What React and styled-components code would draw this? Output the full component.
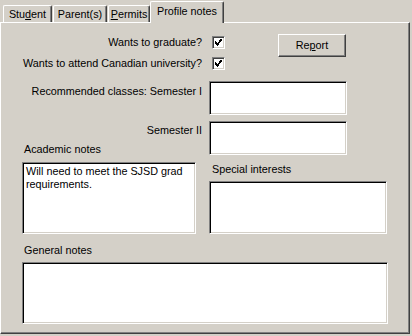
import React from 'react';
import styled, { createGlobalStyle } from 'styled-components';

const GlobalStyle = createGlobalStyle`
  html, body {
    margin: 0;
    padding: 0;
    background: #d4d0c8;
  }
  body {
    font-family: "Liberation Sans", Arial, sans-serif;
    font-size: 10.8px;
    color: #000;
  }
`;

const Window = styled.div`
  width: 412px;
  height: 336px;
  background: #d4d0c8;
  box-sizing: border-box;
`;

const TabBar = styled.div`
  display: flex;
  align-items: flex-end;
  height: 22px;
  padding-left: 3px;
  position: relative;
  z-index: 2;
`;

const Tab = styled.div`
  box-sizing: border-box;
  width: ${(p) => p.$w}px;
  height: ${(p) => (p.$active ? '22px' : '17px')};
  margin: ${(p) => (p.$active ? '0 -1px -1px -1px' : '0 1px 0 0')};
  padding-top: ${(p) => (p.$active ? '3px' : '2px')};
  background: #d4d0c8;
  border-top: 1px solid #fff;
  border-left: 1px solid #fff;
  border-right: 1px solid #404040;
  box-shadow: inset -1px 0 0 #808080;
  border-radius: 2px 2px 0 0;
  line-height: 13px;
  text-align: center;
  white-space: nowrap;
  position: relative;
  z-index: ${(p) => (p.$active ? 3 : 1)};
`;

const Panel = styled.div`
  box-sizing: border-box;
  width: 410px;
  height: 312px;
  border-top: 1px solid #fff;
  border-left: 1px solid #fff;
  border-right: 1px solid #404040;
  border-bottom: 1px solid #404040;
  box-shadow: inset -1px -1px 0 #808080;
  padding: 11px 0 0 20px;
`;

const FormGrid = styled.div`
  display: grid;
  grid-template-columns: 181px 177px;
  column-gap: 7px;
  align-items: start;
`;

const Label = styled.div`
  line-height: 13px;
  text-align: ${(p) => (p.$left ? 'left' : 'right')};
  margin-top: ${(p) => p.$top || 0}px;
  padding-left: ${(p) => (p.$left ? 3 : 0)}px;
  white-space: nowrap;
`;

const LabelStack = styled.div`
  display: flex;
  flex-direction: column;
`;

const ControlRow = styled.div`
  display: flex;
  align-items: flex-start;
  padding-left: 3px;
`;

const CheckBox = styled.div`
  box-sizing: border-box;
  width: 13px;
  height: 13px;
  margin-top: ${(p) => p.$top || 0}px;
  background: #fff;
  border-top: 1px solid #808080;
  border-left: 1px solid #808080;
  border-right: 1px solid #fff;
  border-bottom: 1px solid #fff;
  box-shadow: inset 1px 1px 0 #404040, inset -1px -1px 0 #d4d0c8;
  display: flex;
  align-items: center;
  justify-content: center;

  svg {
    display: block;
  }
`;

const Button = styled.div`
  box-sizing: border-box;
  width: 68px;
  height: 23px;
  margin-left: 53px;
  background: #d4d0c8;
  border-top: 1px solid #fff;
  border-left: 1px solid #fff;
  border-right: 1px solid #404040;
  border-bottom: 1px solid #404040;
  box-shadow: inset -1px -1px 0 #808080;
  display: flex;
  align-items: center;
  justify-content: center;
  line-height: 13px;
`;

const TextBox = styled.div`
  box-sizing: border-box;
  width: ${(p) => p.$w}px;
  height: ${(p) => p.$h}px;
  margin-top: ${(p) => p.$top || 0}px;
  margin-left: ${(p) => p.$left || 0}px;
  background: #fff;
  border-top: 1px solid #808080;
  border-left: 1px solid #808080;
  border-right: 1px solid #fff;
  border-bottom: 1px solid #fff;
  box-shadow: inset 1px 1px 0 #000, inset -1px -1px 0 #d4d0c8;
  padding: 2px 3px;
  line-height: 13px;
`;

const RightStack = styled.div`
  display: flex;
  flex-direction: column;
`;

const FullRow = styled.div`
  grid-column: 1 / span 2;
`;

function Check({ top }) {
  return (
    <CheckBox $top={top}>
      <svg width="9" height="9" viewBox="0 0 9 9" shapeRendering="crispEdges">
        <path
          d="M1 3h1v1H1zM1 4h2v1H1zM1 5h3v1H1zM2 6h3v1H2zM3 7h1v1H3zM4 5h1v1H4zM4 4h2v1H4zM5 3h2v1H5zM6 2h1v1H6zM6 1h1v1H6zM5 2h1v2H5zM7 1h1v2H7z"
          fill="#000"
        />
      </svg>
    </CheckBox>
  );
}

function App() {
  return (
    <Window>
      <GlobalStyle />
      <TabBar>
        <Tab $w={49}>
          Stu<u>d</u>ent
        </Tab>
        <Tab $w={54}>Parent(s)</Tab>
        <Tab $w={42}>
          <u>P</u>ermits
        </Tab>
        <Tab $w={74} $active>
          Profile notes
        </Tab>
      </TabBar>
      <Panel>
        <FormGrid>
          <Label $top={2}>Wants to graduate?</Label>
          <ControlRow>
            <Check top={2} />
            <Button>
              Re<u>p</u>ort
            </Button>
          </ControlRow>

          <Label>Wants to attend Canadian university?</Label>
          <ControlRow>
            <Check top={0} />
          </ControlRow>

          <Label $top={15}>Recommended classes: Semester I</Label>
          <TextBox $w={138} $h={34} $top={11} />

          <LabelStack>
            <Label $top={9}>Semester II</Label>
            <Label $left $top={6}>
              Academic notes
            </Label>
          </LabelStack>
          <TextBox $w={138} $h={34} $top={6} />

          <TextBox $w={174} $h={72} $top={6} $left={1}>
            Will need to meet the SJSD grad requirements.
          </TextBox>
          <RightStack>
            <Label $left $top={7}>
              Special interests
            </Label>
            <TextBox $w={178} $h={53} $top={5} />
          </RightStack>

          <FullRow>
            <Label $left $top={10}>
              General notes
            </Label>
            <TextBox $w={366} $h={62} $top={5} $left={1} />
          </FullRow>
        </FormGrid>
      </Panel>
    </Window>
  );
}

export default App;
